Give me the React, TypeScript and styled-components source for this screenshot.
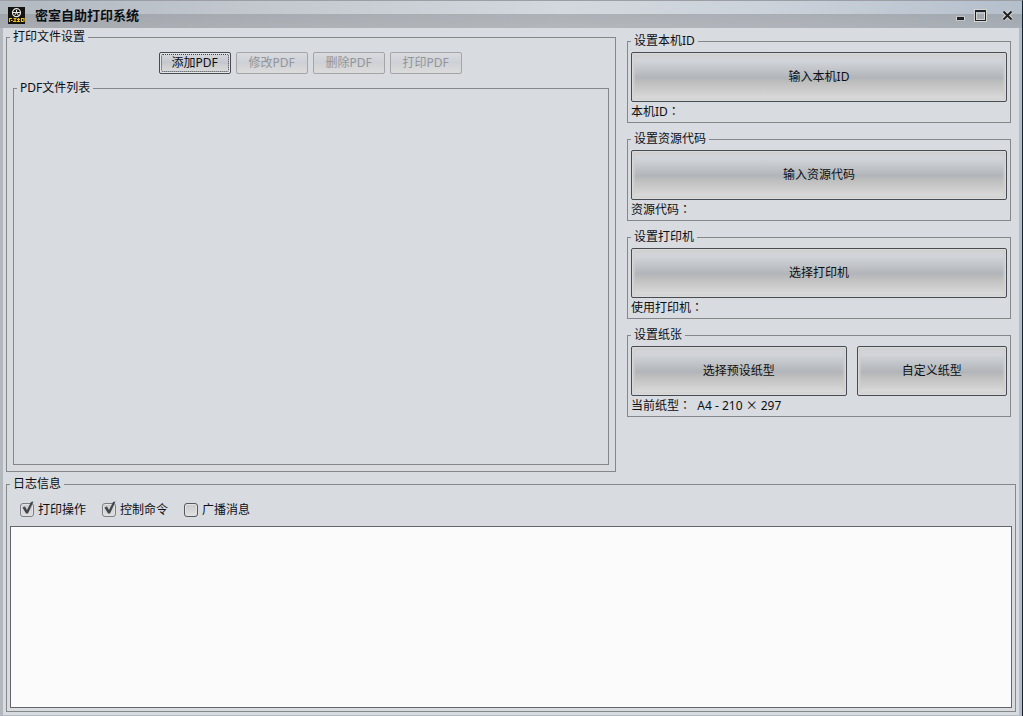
import React, { useState } from "react";
import styled, { createGlobalStyle, css } from "styled-components";

const GlobalStyle = createGlobalStyle`
  *, *::before, *::after { box-sizing: border-box; }
  body { margin: 0; background: #d8dbe0; }
  body, button, input, textarea {
    font-family: "Noto Sans", "Noto Sans CJK SC", sans-serif;
    font-size: 12px;
    line-height: 16px;
    color: #0c0f14;
  }
`;

const Window = styled.div`
  display: flex;
  flex-direction: column;
  min-height: 100vh;
  background: #d8dbe0;
  box-shadow: inset 3px 0 #b3b8bf, inset -1px 0 #15202e, inset -4px 0 #b2bbc6, inset 0 -1px #b4bac2;
`;

const TitleBar = styled.header`
  display: flex;
  align-items: center;
  height: 28px;
  padding: 1px 7px 0 8px;
  border-top: 1px solid #9b9fa5;
  border-right: 1px solid #15202e;
  background:
    linear-gradient(transparent 13px, rgba(150, 153, 158, 0.62) 13px, rgba(160, 163, 167, 0.62)),
    linear-gradient(90deg, #b2b9c1, #c3c8cf 25%, #d3d8de 55%, #ccd2da 75%, #b4bfcc);
`;

const Title = styled.h1`
  flex: 1;
  margin: 0 0 0 10px;
  font-size: 13px;
  line-height: 20px;
  font-weight: 700;
`;

const Controls = styled.div`
  display: flex;
  gap: 6px;
`;

const ControlButton = styled.button<{ $spaced?: boolean }>`
  display: flex;
  width: 14px;
  height: 14px;
  margin: 0 0 0 ${(p) => (p.$spaced ? "7px" : "0")};
  padding: 0;
  border: 0;
  background: none;
`;

const Workspace = styled.main`
  flex: 1;
  display: grid;
  grid-template-columns: minmax(0, 610fr) minmax(0, 384fr);
  column-gap: 11px;
  padding: 1px 12px 4px 6px;
`;

const Group = styled.fieldset`
  display: flex;
  flex-direction: column;
  min-width: 0;
  margin: 0;
  padding: 3px;
  border: 1px solid #868788;
`;

const Legend = styled.legend`
  padding: 0 3px;
  line-height: 16px;
`;

const ListGroup = styled(Group)`
  flex: 1;
  margin: 6px 3px 3px;
`;

const FileToolbar = styled.div`
  display: flex;
  justify-content: center;
  gap: 5px;
  padding: 4px 2px 0 0;
`;

const buttonBase = css`
  border: 1px solid #474c53;
  border-radius: 2px;
  padding: 0;
  white-space: nowrap;
`;

const SmallButton = styled.button<{ $active?: boolean }>`
  ${buttonBase}
  position: relative;
  width: 72px;
  height: 22px;
  background: linear-gradient(#d7dade, #c3c7cd 50%, #cdced0 60%, #dcdcdc);
  ${(p) =>
    p.$active &&
    css`
      box-shadow: inset 0 0 0 1px #e4e5e7;
      &::after {
        content: "";
        position: absolute;
        inset: 1px;
        border: 1px dotted #3c4046;
        border-radius: 2px;
      }
    `}
  &:disabled {
    color: #92959a;
    border-color: #a3a5a9;
    background: linear-gradient(#d9dbdf, #cdd0d6 50%, #d3d4d6 60%, #dbdbdc);
  }
`;

const LargeButton = styled.button<{ $grow?: number }>`
  ${buttonBase}
  flex: ${(p) => p.$grow ?? 1} 1 0;
  min-width: 0;
  height: 50px;
  box-shadow: inset 0 0 0 1px #d9d9da, inset 0 0 1px 3px rgba(208, 208, 208, 0.6);
  background: linear-gradient(#d2d2d2, #d1d4d9 16%, #b1b5ba 52%, #bdbdbd 60%, #dfdfdf);
`;

const Settings = styled.aside`
  display: flex;
  flex-direction: column;
  gap: 8px;
  padding-top: 4px;
`;

const ButtonRow = styled.div`
  display: flex;
  gap: 10px;
`;

const Status = styled.p`
  margin: 1px 0 0;
  line-height: 16px;
  height: 16px;
  white-space: pre;
`;

/* Full-width punctuation, centred in its square */
const Wide = styled.span`
  font-family: "Noto Sans CJK TC", sans-serif;
`;

const LogArea = styled.section`
  padding: 0 7px 4px 6px;
`;

const FilterRow = styled.div`
  display: flex;
  gap: 16px;
  padding: 7px 10px 8px;
`;

const FilterLabel = styled.label`
  position: relative;
  display: flex;
  align-items: center;
  gap: 4px;
`;

const Tick = styled.input`
  appearance: none;
  width: 14px;
  height: 14px;
  margin: 0;
  border: 1px solid #55585d;
  border-radius: 3px;
  background: linear-gradient(#c9cacc, #e0e0e0);
  box-shadow: inset 0 0 0 1px #e2e2e3;
  &:checked { border-color: #7b7e83; }
`;

const TickMark = styled.svg`
  position: absolute;
  left: 0;
  top: -1px;
  pointer-events: none;
`;

const LogText = styled.textarea`
  display: block;
  width: 100%;
  height: 182px;
  margin: 0;
  padding: 4px;
  border: 1px solid #63656a;
  border-radius: 0;
  outline: none;
  resize: none;
  background: #fbfbfb;
`;

const AppIcon = () => (
  <svg width="17" height="17" viewBox="0 0 17 17" aria-hidden="true">
    <rect width="17" height="17" fill="#15130f" />
    <circle cx="8.5" cy="5.7" r="4" fill="none" stroke="#e8e8e8" strokeWidth="1.2" />
    <path d="M4.500 5.500h8M8.500 3v3M8.500 5.500L6.500 8.500M8.500 5.500l2 3" fill="none" stroke="#e8e8e8" />
    <path
      d="M1 11.500h3M1.500 11v4M3 13.500h1.500M5.500 11.500h3M7 11v3.500M5 14.500h3.500M9 12.500h3M10.500 11v4M9 14.500h3M13 11.500h3v3M13.500 12v2.500h2"
      fill="none"
      stroke="#f7c20f"
      strokeWidth="1.2"
    />
  </svg>
);

const halo = { stroke: "#d5d6d2", strokeWidth: 4, fill: "none" };
const ink = { stroke: "#1f2124", strokeWidth: 2, fill: "none" };

const MinimizeIcon = () => (
  <svg width="14" height="14" viewBox="0 0 14 14" aria-hidden="true">
    <path d="M2 10.500h9" {...halo} />
    <path d="M3 10.500h7" {...ink} strokeWidth={3} />
  </svg>
);

const MaximizeIcon = () => (
  <svg width="14" height="14" viewBox="0 0 14 14" aria-hidden="true">
    <rect x="1.5" y="2.500" width="10" height="10" {...halo} strokeWidth={3} />
    <rect x="1.5" y="2.500" width="10" height="10" {...ink} strokeWidth={1} />
    <path d="M1 3h11" {...ink} />
  </svg>
);

const CloseIcon = () => (
  <svg width="14" height="14" viewBox="0 0 14 14" aria-hidden="true">
    <path d="M2.500 3.500l8 8m0-8l-8 8" {...halo} />
    <path d="M2.500 3.500l8 8m0-8l-8 8" {...ink} />
  </svg>
);

function Filter({ text, initial }: { text: string; initial: boolean }) {
  const [on, setOn] = useState(initial);
  return (
    <FilterLabel>
      <Tick type="checkbox" checked={on} onChange={() => setOn(!on)} />
      {on && (
        <TickMark width="15" height="15" viewBox="0 0 15 15" aria-hidden="true">
          <path d="M2.500 6.500l2.500-1 2 3.500L11 1l2.500-.5L8 12.500H6z" fill="#41464d" />
        </TickMark>
      )}
      {text}
    </FilterLabel>
  );
}

function Setting({ title, action, name }: { title: string; action: string; name: string }) {
  return (
    <Group>
      <Legend>{title}</Legend>
      <ButtonRow>
        <LargeButton type="button">{action}</LargeButton>
      </ButtonRow>
      <Status>{name}<Wide>：</Wide></Status>
    </Group>
  );
}

export default function App() {
  return (
    <Window>
      <GlobalStyle />
      <TitleBar>
        <AppIcon />
        <Title>密室自助打印系统</Title>
        <Controls>
          <ControlButton type="button" aria-label="最小化"><MinimizeIcon /></ControlButton>
          <ControlButton type="button" aria-label="最大化"><MaximizeIcon /></ControlButton>
          <ControlButton type="button" aria-label="关闭" $spaced><CloseIcon /></ControlButton>
        </Controls>
      </TitleBar>
      <Workspace>
        <Group>
          <Legend>打印文件设置</Legend>
          <FileToolbar>
            <SmallButton type="button" $active>添加PDF</SmallButton>
            <SmallButton type="button" disabled>修改PDF</SmallButton>
            <SmallButton type="button" disabled>删除PDF</SmallButton>
            <SmallButton type="button" disabled>打印PDF</SmallButton>
          </FileToolbar>
          <ListGroup>
            <Legend>PDF文件列表</Legend>
          </ListGroup>
        </Group>
        <Settings>
          <Setting title="设置本机ID" action="输入本机ID" name="本机ID" />
          <Setting title="设置资源代码" action="输入资源代码" name="资源代码" />
          <Setting title="设置打印机" action="选择打印机" name="使用打印机" />
          <Group>
            <Legend>设置纸张</Legend>
            <ButtonRow>
              <LargeButton type="button" $grow={216}>选择预设纸型</LargeButton>
              <LargeButton type="button" $grow={150}>自定义纸型</LargeButton>
            </ButtonRow>
            <Status>当前纸型<Wide>：</Wide>{"  A4 - 210 "}<Wide>×</Wide>{" 297"}</Status>
          </Group>
        </Settings>
      </Workspace>
      <LogArea>
        <Group>
          <Legend>日志信息</Legend>
          <FilterRow>
            <Filter text="打印操作" initial />
            <Filter text="控制命令" initial />
            <Filter text="广播消息" initial={false} />
          </FilterRow>
          <LogText aria-label="日志信息" readOnly />
        </Group>
      </LogArea>
    </Window>
  );
}
